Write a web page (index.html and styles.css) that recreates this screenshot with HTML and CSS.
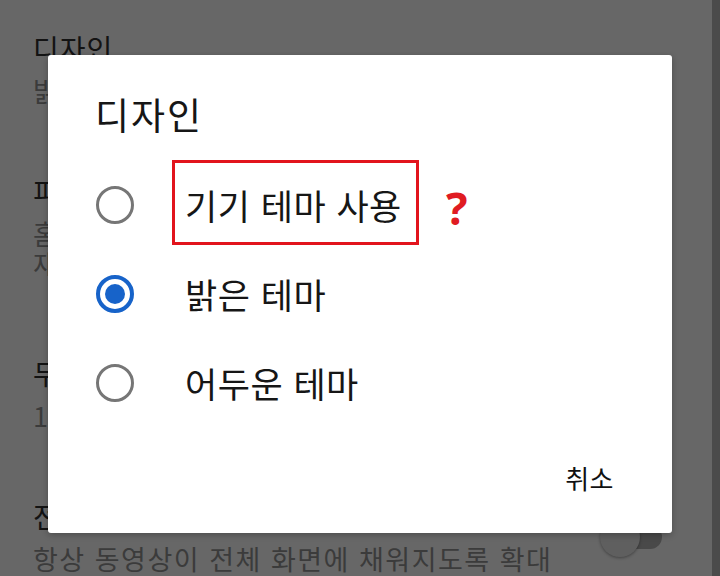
FILE: index.html
```html
<!DOCTYPE html>
<html lang="ko">
<head>
<meta charset="utf-8">
<title>디자인</title>
<link rel="stylesheet" href="styles.css">
</head>
<body>
<div class="page">
  <div class="settings">
    <div class="item">
      <div class="item-title">디자인</div>
      <div class="item-sub">밝은 테마</div>
    </div>
    <div class="item">
      <div class="item-title">피드에서 재생</div>
      <div class="item-sub">홈 및 기타 피드를 탐색하는 동안 동영상 재생<br>재생 미리보기 사용</div>
    </div>
    <div class="item item-wide">
      <div class="item-title">두 번 탭하여 탐색</div>
      <div class="item-sub">10초</div>
    </div>
    <div class="item item-row">
      <div class="item-text">
        <div class="item-title">전체 화면으로 확대</div>
        <div class="item-sub">항상 동영상이 전체 화면에 채워지도록 확대</div>
      </div>
      <div class="switch"><span class="track"></span><span class="thumb"></span></div>
    </div>
  </div>

  <div class="dialog">
    <div class="dialog-title">디자인</div>
    <div class="options">
      <div class="option"><span class="radio"></span><span class="label">기기 테마 사용</span></div>
      <div class="option"><span class="radio checked"></span><span class="label">밝은 테마</span></div>
      <div class="option"><span class="radio"></span><span class="label">어두운 테마</span></div>
    </div>
    <div class="actions"><span class="cancel">취소</span></div>
    <div class="highlight"></div>
    <div class="question">?</div>
  </div>
</div>
<div class="strip"></div>
</body>
</html>
```

FILE: styles.css
```css
html, body {
  margin: 0;
  padding: 0;
}
body {
  width: 720px;
  height: 576px;
  overflow: hidden;
  display: flex;
  background: #676767;
  font-family: "Noto Sans CJK KR", "Noto Sans", sans-serif;
}
.page {
  flex: 1;
  position: relative;
}
.strip {
  width: 8px;
  background: #4b4b4b;
}
.settings {
  padding-top: 31px;
}
.item {
  padding-left: 33px;
  margin-top: 68px;
}
.item:first-child {
  margin-top: 0;
}
.item-wide {
  margin-top: 77px;
}
.item-title {
  font-size: 28px;
  line-height: 34px;
  letter-spacing: 1px;
  color: #131313;
  margin-bottom: 11px;
  white-space: nowrap;
}
.item-sub {
  font-size: 27px;
  line-height: 30px;
  letter-spacing: 1.5px;
  color: #3b3b3b;
  white-space: nowrap;
}
.item-row {
  display: flex;
  align-items: center;
}
.switch {
  margin-left: auto;
  margin-right: 50px;
  width: 62px;
  height: 40px;
  position: relative;
}
.track {
  position: absolute;
  right: 0;
  top: 8px;
  width: 50px;
  height: 24px;
  border-radius: 12px;
  background: #494949;
}
.thumb {
  position: absolute;
  left: 0;
  top: 0;
  width: 40px;
  height: 40px;
  border-radius: 50%;
  background: #5f5f5f;
  box-shadow: 0 1px 3px rgba(0, 0, 0, 0.35);
}

.dialog {
  position: absolute;
  left: 48px;
  top: 55px;
  width: 624px;
  box-sizing: border-box;
  padding: 37px 58px 37px 48px;
  background: #fff;
  border-radius: 3px;
  box-shadow: 0 2px 6px rgba(0, 0, 0, 0.25);
}
.dialog-title {
  font-size: 37px;
  line-height: 44px;
  letter-spacing: 2px;
  color: #161616;
  margin-left: -1px;
  margin-bottom: 24px;
}
.option {
  height: 89px;
  display: flex;
  align-items: center;
  gap: 51px;
}
.radio {
  width: 38px;
  height: 38px;
  box-sizing: border-box;
  border-radius: 50%;
  border: 3px solid #767676;
  display: flex;
  align-items: center;
  justify-content: center;
}
.radio.checked {
  border: 4px solid #1763c9;
}
.radio.checked::after {
  content: "";
  width: 20px;
  height: 20px;
  border-radius: 50%;
  background: #1763c9;
}
.label {
  font-size: 35px;
  line-height: 40px;
  letter-spacing: 0.5px;
  color: #161616;
}
.actions {
  margin-top: 33px;
  display: flex;
  justify-content: flex-end;
}
.cancel {
  font-size: 26px;
  line-height: 36px;
  letter-spacing: 0.5px;
  color: #111;
}
.highlight {
  position: absolute;
  left: 124px;
  top: 105px;
  width: 247px;
  height: 85px;
  box-sizing: border-box;
  border: 3px solid #e2141d;
}
.question {
  position: absolute;
  left: 398px;
  top: 130px;
  font-family: "Noto Sans", sans-serif;
  font-weight: 700;
  font-size: 45px;
  line-height: 45px;
  color: #e01b22;
}
```
